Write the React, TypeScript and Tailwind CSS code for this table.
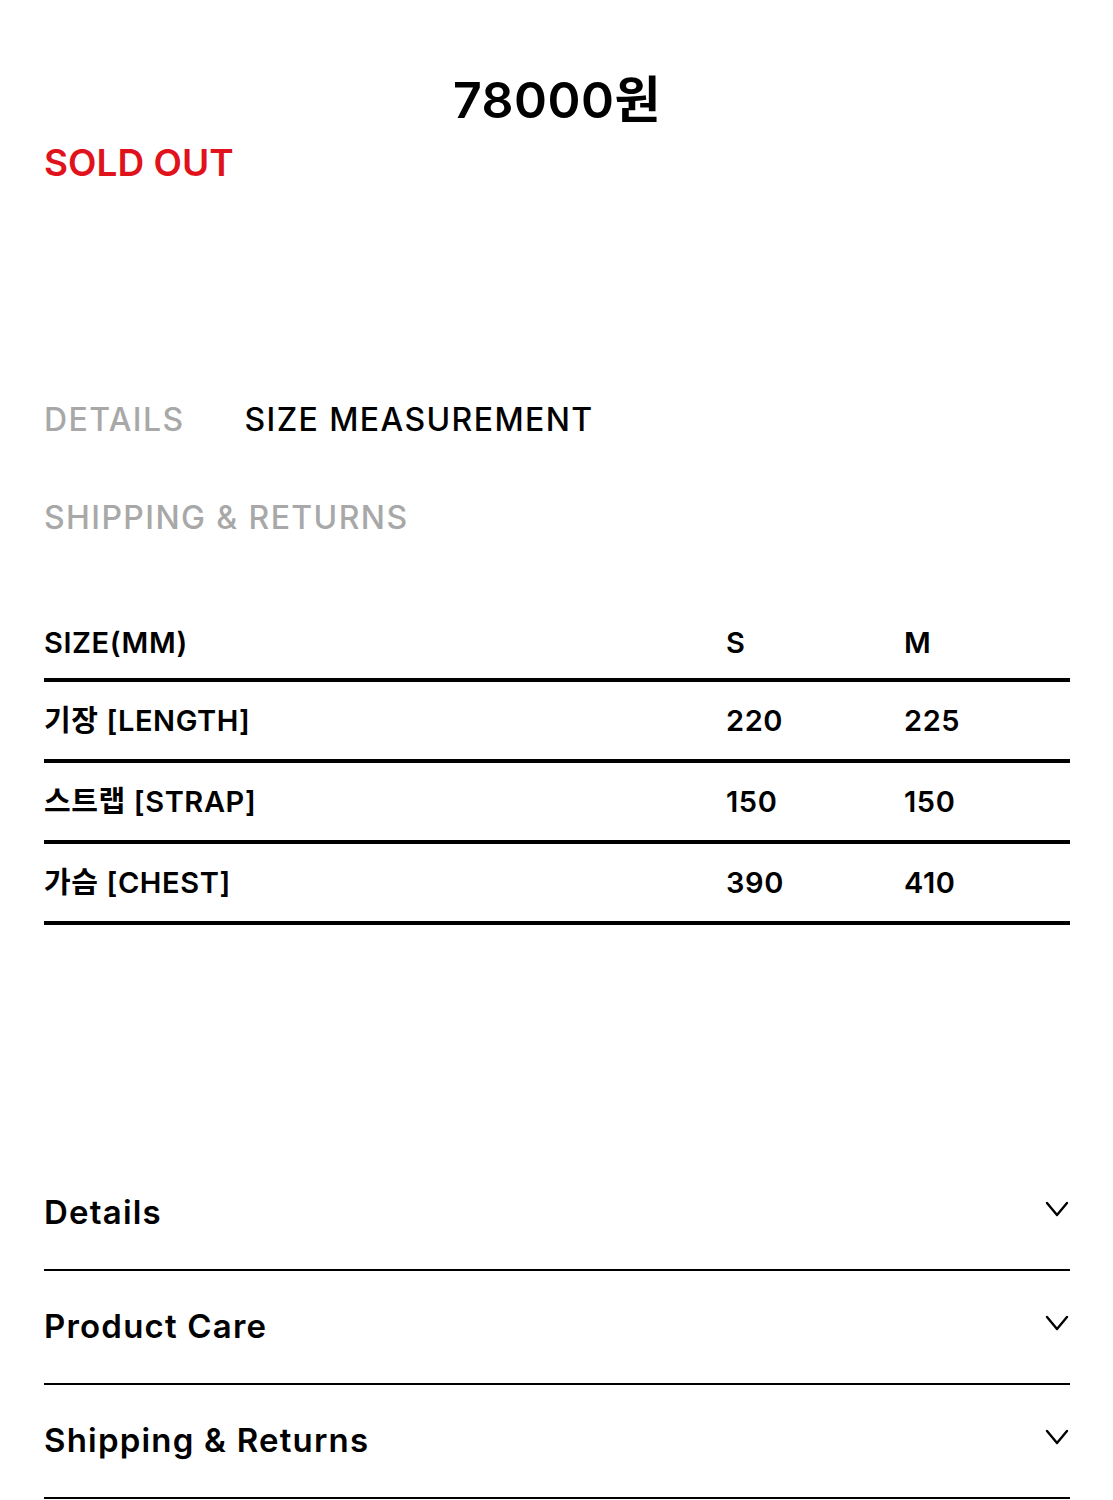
import React from "react";

const font = { fontFamily: '"Inter", "Noto Sans CJK KR", sans-serif' } as React.CSSProperties;

function Chevron() {
  return (
    <svg width="24" height="17" viewBox="0 0 24 17" fill="none" stroke="#000" strokeWidth="2.4" strokeLinecap="round" strokeLinejoin="round">
      <path d="M2 2 L12 14 L22 2" />
    </svg>
  );
}

const rows = [
  ["기장 [LENGTH]", "220", "225"],
  ["스트랩 [STRAP]", "150", "150"],
  ["가슴 [CHEST]", "390", "410"],
];

export default function App() {
  return (
    <div className="w-[1113px] h-[1500px] bg-white overflow-hidden text-black" style={font}>
      <div className="px-[44px] pr-[43px]">
        <div className="pt-[68px] text-center text-[50px] leading-[64px] font-semibold tracking-[0.5px]">78000원</div>
        <div className="mt-[6px] text-[37px] leading-[50px] font-semibold text-[#e0121b]">SOLD OUT</div>

        <div className="mt-[212px] flex gap-[60px] text-[32px] leading-[40px] font-medium tracking-[1.4px]">
          <span className="text-[#a8a8a8]">DETAILS</span>
          <span className="text-black">SIZE MEASUREMENT</span>
        </div>
        <div className="mt-[58px] text-[32px] leading-[40px] font-medium tracking-[1.4px] text-[#a8a8a8]">SHIPPING &amp; RETURNS</div>

        <div className="mt-[70px] text-[29px] font-semibold tracking-[0.6px]">
          <div className="grid grid-cols-[682px_178px_1fr] items-center h-[74px] border-b-[4px] border-black">
            <span>SIZE(MM)</span>
            <span>S</span>
            <span>M</span>
          </div>
          {rows.map((r) => (
            <div key={r[0]} className="grid grid-cols-[682px_178px_1fr] items-center h-[81px] border-b-[4px] border-black">
              <span>{r[0]}</span>
              <span>{r[1]}</span>
              <span>{r[2]}</span>
            </div>
          ))}
        </div>

        <div className="mt-[232px]">
          {["Details", "Product Care", "Shipping & Returns"].map((t) => (
            <div key={t} className="flex justify-between border-b-[2px] border-black h-[114px]">
              <span className="text-[33px] leading-[40px] font-semibold tracking-[1.2px] pt-[35px]">{t}</span>
              <span className="pt-[44px] pr-[1px]"><Chevron /></span>
            </div>
          ))}
        </div>
      </div>
    </div>
  );
}
